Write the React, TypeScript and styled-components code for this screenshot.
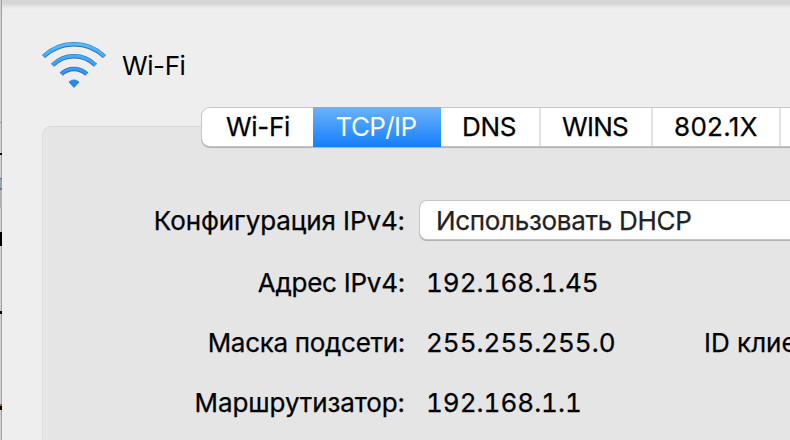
import React from "react";
import styled, { createGlobalStyle } from "styled-components";

const GlobalStyle = createGlobalStyle`
  *, *::before, *::after { box-sizing: border-box; }
  body {
    margin: 0;
    overflow: hidden;
    font-family: Inter, "Liberation Sans", sans-serif;
    font-size: 26px;
    line-height: 40px;
    color: #000;
    white-space: nowrap;
  }
`;

const Screen = styled.div`
  display: flex;
  width: 790px;
  height: 440px;
  overflow: hidden;
  background: #eee;
`;

const Backdrop = styled.div`
  display: flex;
  flex-direction: column;
  flex: 0 0 2px;
  height: 440px;
  background: linear-gradient(90deg, #cfcfcf 1px, #a3a3a3 1px);
`;

const Mark = styled.div<{ $height: number; $color: string }>`
  flex: 0 0 ${(p) => p.$height}px;
  width: 2px;
  background: ${(p) => p.$color};
`;

const Sheet = styled.main`
  display: flex;
  flex-direction: column;
  flex: 0 0 788px;
  height: 440px;
  background: linear-gradient(#d4d4d4 0, #d6d6d6 4px, #e4e4e4 6px, #eaeaea 8px, #eee 9px);
`;

const Header = styled.header`
  display: flex;
  align-items: flex-start;
  flex: 0 0 126px;
  padding: 40px 0 0 39px;
`;

const Title = styled.h1`
  margin: 6px 0 0 15px;
  font-size: 26px;
  font-weight: 400;
  letter-spacing: -0.4px;
`;

const Panel = styled.section`
  flex: 0 0 340px;
  width: 780px;
  margin-left: 40px;
  border: 1px solid #d7d7d7;
  border-left-color: #dddddd;
  border-bottom: 0;
  border-radius: 9px 0 0 0;
  background: #e5e5e5;
  -webkit-text-stroke: 0.25px currentColor;
`;

const Tabs = styled.nav`
  display: flex;
  width: 700px;
  height: 38px;
  margin: -19px 0 0 159px;
  border-radius: 8px;
  background: #fff;
  box-shadow: 0 0 0 1px #c6c6c6, 0 1px 0 1px #b2b2b2, 0 2px 1px #ccc;
`;

const Tab = styled.button<{ $width: number; $inset: number; $active?: boolean; $divided?: boolean; $tracking: number }>`
  flex: 0 0 ${(p) => p.$width}px;
  height: ${(p) => (p.$active ? 40 : 38)}px;
  margin: ${(p) => (p.$active ? "-1px 0" : "0")};
  padding: 0 0 0 ${(p) => p.$inset}px;
  border: 0;
  border-right: ${(p) => (p.$divided ? "2px solid #e3e3e3" : "0")};
  background: ${(p) => (p.$active ? "linear-gradient(#6cb3fa, #157efb)" : "transparent")};
  color: ${(p) => (p.$active ? "#fff" : "#000")};
  -webkit-text-stroke: ${(p) => (p.$active ? 0 : 0.25)}px currentColor;
  font: inherit;
  line-height: 38px;
  letter-spacing: ${(p) => p.$tracking}px;
  text-align: left;
`;

const Form = styled.div`
  display: flex;
  flex-direction: column;
  padding-top: 54px;
`;

const Row = styled.div<{ $height: number }>`
  display: flex;
  align-items: center;
  height: ${(p) => p.$height}px;
`;

const Label = styled.label<{ $tracking: number }>`
  flex: 0 0 362px;
  padding-top: 2px;
  text-align: right;
  letter-spacing: ${(p) => p.$tracking}px;
`;

const Value = styled.span`
  flex: 0 0 278px;
  margin-left: 21px;
  padding-top: 2px;
  font-variant-numeric: tabular-nums;
`;

const ClientId = styled.span`
  padding-top: 2px;
`;

const Select = styled.div`
  flex: 0 0 420px;
  height: 38px;
  margin-left: 15px;
  padding-left: 16px;
  border-radius: 7px;
  background: #fff;
  box-shadow: 0 0 0 1px #c6c6c6, 0 1px 0 1px #b2b2b2, 0 2px 1px #ccc;
  color: #222;
  line-height: 39px;
  letter-spacing: -0.3px;
`;

const arcs = [
  "M43.5 56.5A44 44 0 0 1 104.5 56.5",
  "M52.5 65.3A30 30 0 0 1 95.5 65.3",
  "M61.3 74.2A18 18 0 0 1 86.7 74.2",
];

function WifiIcon() {
  return (
    <svg width="66" height="50" viewBox="41 40 66 50" fill="none" aria-hidden="true">
      <defs>
        <linearGradient id="signal" gradientUnits="userSpaceOnUse" x1="0" y1="42" x2="0" y2="88">
          <stop offset="0" stopColor="#55bdfb" />
          <stop offset="1" stopColor="#1d84f7" />
        </linearGradient>
      </defs>
      {arcs.map((d) => (
        <g key={d}>
          <path d={d} stroke="#2870ad" strokeWidth="4.5" />
          <path d={d} stroke="url(#signal)" strokeWidth="3" transform="translate(0 -.15)" />
        </g>
      ))}
      <path d="M69 82Q74 77.8 79 82L74 87.4Z" fill="url(#signal)" stroke="#2377c8" strokeWidth=".8" />
    </svg>
  );
}

const marks: [number, string][] = [
  [122, "transparent"], [1, "#999"], [30, "transparent"], [2, "#000"],
  [23, "transparent"], [1, "#777"], [9, "#8fa5b2"], [2, "#777"],
  [18, "#b2b2b2"], [24, "transparent"], [14, "#000"], [65, "transparent"],
  [3, "#000"], [90, "transparent"], [2, "#a65a10"], [4, "#000"],
];

export default function App() {
  return (
    <>
      <GlobalStyle />
      <Screen>
        <Backdrop>
          {marks.map(([height, color], i) => (
            <Mark key={i} $height={height} $color={color} />
          ))}
        </Backdrop>
        <Sheet>
          <Header>
            <WifiIcon />
            <Title>Wi-Fi</Title>
          </Header>
          <Panel>
            <Tabs>
              <Tab $width={111} $inset={24} $tracking={-0.3}>Wi-Fi</Tab>
              <Tab $width={128} $inset={22.5} $tracking={-0.6} $active>TCP/IP</Tab>
              <Tab $width={100} $inset={21} $tracking={-0.3} $divided>DNS</Tab>
              <Tab $width={112} $inset={21} $tracking={-0.7} $divided>WINS</Tab>
              <Tab $width={128} $inset={21} $tracking={0.3} $divided>802.1X</Tab>
            </Tabs>
            <Form>
              <Row $height={40}>
                <Label $tracking={-0.1}>Конфигурация IPv4:</Label>
                <Select>Использовать DHCP</Select>
              </Row>
              <Row $height={84}>
                <Label $tracking={-0.25}>Адрес IPv4:</Label>
                <Value>192.168.1.45</Value>
              </Row>
              <Row $height={36}>
                <Label $tracking={-0.3}>Маска подсети:</Label>
                <Value>255.255.255.0</Value>
                <ClientId>ID клие</ClientId>
              </Row>
              <Row $height={84}>
                <Label $tracking={-0.1}>Маршрутизатор:</Label>
                <Value>192.168.1.1</Value>
              </Row>
            </Form>
          </Panel>
        </Sheet>
      </Screen>
    </>
  );
}
